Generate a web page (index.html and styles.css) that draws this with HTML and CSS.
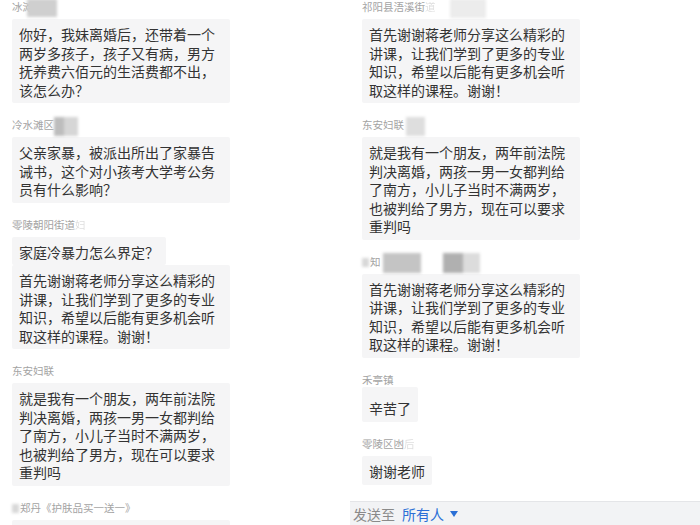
FILE: index.html
```html
<!DOCTYPE html>
<html lang="zh-CN">

<head>
  <meta charset="UTF-8">
  <meta name="viewport" content="width=device-width, initial-scale=1.0">
  <title>互动消息</title>
  <link rel="stylesheet" href="styles.css">
</head>

<body>
  <div class="panel">
    <div class="chat">
      <div class="msg">
        <p class="name">冰滩<span class="blur blur-a"></span></p>
        <div class="bubble">你好，我妹离婚后，还带着一个两岁多孩子，孩子又有病，男方抚养费六佰元的生活费都不出，该怎么办？</div>
      </div>
      <div class="msg">
        <p class="name">冷水滩区<span class="blur blur-b"></span></p>
        <div class="bubble">父亲家暴，被派出所出了家暴告诫书，这个对小孩考大学考公务员有什么影响？</div>
      </div>
      <div class="msg">
        <p class="name">零陵朝阳街道<span class="fade">妇</span></p>
        <div class="bubble">家庭冷暴力怎么界定？</div>
        <div class="bubble">首先谢谢蒋老师分享这么精彩的讲课，让我们学到了更多的专业知识，希望以后能有更多机会听取这样的课程。谢谢！</div>
      </div>
      <div class="msg">
        <p class="name">东安妇联</p>
        <div class="bubble">就是我有一个朋友，两年前法院判决离婚，两孩一男一女都判给了南方，小儿子当时不满两岁，也被判给了男方，现在可以要求重判吗</div>
      </div>
      <div class="msg">
        <p class="name"><span class="blur blur-dot"></span>郑丹《护肤品买一送一》</p>
        <div class="bubble bubble-empty"></div>
      </div>
    </div>
  </div>

  <div class="panel panel-right">
    <div class="chat">
      <div class="msg">
        <p class="name">祁阳县浯溪街<span class="fade">道</span><span class="blur blur-c"></span></p>
        <div class="bubble">首先谢谢蒋老师分享这么精彩的讲课，让我们学到了更多的专业知识，希望以后能有更多机会听取这样的课程。谢谢！</div>
      </div>
      <div class="msg">
        <p class="name">东安妇联<span class="blur blur-d"></span></p>
        <div class="bubble">就是我有一个朋友，两年前法院判决离婚，两孩一男一女都判给了南方，小儿子当时不满两岁，也被判给了男方，现在可以要求重判吗</div>
      </div>
      <div class="msg">
        <p class="name"><span class="blur blur-dot"></span>知<span class="blur blur-e"></span><span class="blur blur-f"></span></p>
        <div class="bubble">首先谢谢蒋老师分享这么精彩的讲课，让我们学到了更多的专业知识，希望以后能有更多机会听取这样的课程。谢谢！</div>
      </div>
      <div class="msg tight">
        <p class="name">禾亭镇</p>
        <div class="bubble bubble-tall">辛苦了</div>
      </div>
      <div class="msg">
        <p class="name">零陵区凼<span class="fade">后</span></p>
        <div class="bubble">谢谢老师</div>
      </div>
    </div>
    <div class="send-bar">
      <span class="send-label">发送至</span>
      <span class="send-target">所有人</span>
      <span class="send-arrow"></span>
    </div>
  </div>
</body>

</html>
```

FILE: styles.css
```css
* {
  box-sizing: border-box;
  margin: 0;
  padding: 0;
}

body {
  width: 700px;
  height: 525px;
  overflow: hidden;
  display: flex;
  background: #fff;
  color: #333;
  font-family: 'Noto Sans CJK SC', 'Noto Sans', sans-serif;
}

.panel {
  width: 350px;
  height: 525px;
  overflow: hidden;
  display: flex;
  flex-direction: column;
}

.chat {
  flex: 1;
  overflow: hidden;
  padding-left: 12px;
  display: flex;
  flex-direction: column;
  align-items: flex-start;
  gap: 15px;
}

.msg {
  display: flex;
  flex-direction: column;
  align-items: flex-start;
}

.name {
  font-size: 10.5px;
  line-height: 14px;
  height: 14px;
  color: #a3a3a3;
  margin-bottom: 5px;
  white-space: nowrap;
}

.msg.tight .name {
  margin-bottom: 0;
}

.fade {
  opacity: 0.35;
}

.blur {
  display: inline-block;
  vertical-align: middle;
  margin: -3px 0;
  filter: blur(1.5px);
}

.blur-a {
  width: 30px;
  height: 18px;
  margin-left: -6px;
  background: #cfcfcf;
}

.blur-b {
  width: 24px;
  height: 19px;
  margin-left: 0;
  background: linear-gradient(90deg, #bdbdbd 40%, #d6d6d6 40%);
}

.blur-c {
  width: 36px;
  height: 19px;
  margin-left: 14px;
  background: #ececec;
}

.blur-d {
  width: 19px;
  height: 19px;
  margin-left: 2px;
  background: #dedede;
}

.blur-dot {
  width: 7px;
  height: 9px;
  margin: 0 1px 0 0;
  background: #d8d8d8;
}

.blur-e {
  width: 38px;
  height: 20px;
  margin-left: 2px;
  background: #c4c4c4;
}

.blur-f {
  width: 37px;
  height: 20px;
  margin-left: 22px;
  background: linear-gradient(90deg, #b0b0b0 55%, #dcdcdc 55%);
}

.bubble {
  max-width: 218px;
  padding: 6px 7px 4px;
  font-size: 14px;
  line-height: 18.5px;
  background: #f5f5f6;
  border-radius: 2px;
}

.bubble-tall {
  padding-top: 12px;
  padding-bottom: 5px;
}

.bubble-empty {
  width: 218px;
  height: 30px;
}

.send-bar {
  height: 24px;
  flex: 0 0 24px;
  background: #f2f3f5;
  border-top: 1px solid #e4e5e8;
  display: flex;
  align-items: center;
  padding-left: 3px;
  font-size: 14px;
}

.send-label {
  color: #8a8a8a;
}

.send-target {
  color: #2b6fd6;
  margin-left: 7px;
}

.send-arrow {
  width: 0;
  height: 0;
  margin-left: 6px;
  border-left: 4px solid transparent;
  border-right: 4px solid transparent;
  border-top: 6px solid #2b6fd6;
}
```
